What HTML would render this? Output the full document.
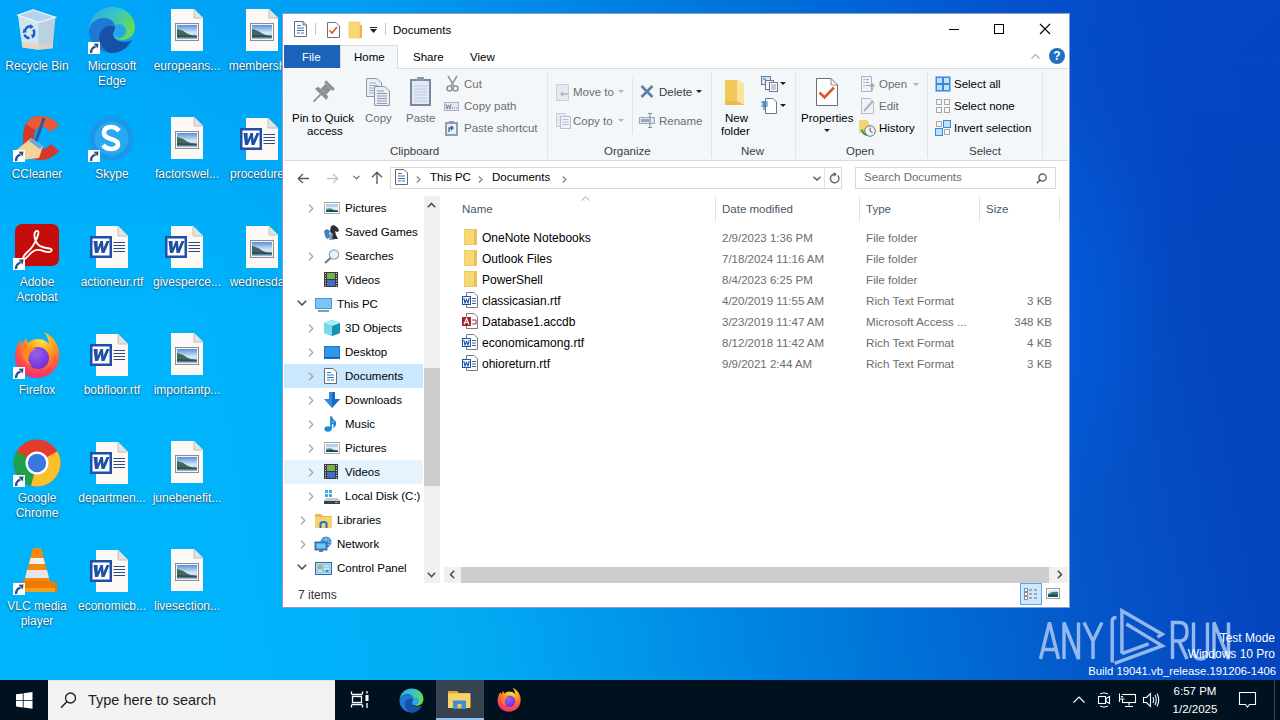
<!DOCTYPE html>
<html><head><meta charset="utf-8">
<style>
*{box-sizing:border-box}
html,body{margin:0;padding:0}
body{width:1280px;height:720px;overflow:hidden;position:relative;font-family:"Liberation Sans",sans-serif;font-size:12px;color:#000;
background:linear-gradient(80deg,#00b4fc 0%,#00b4fc 17%,#02acf4 34%,#008ae4 52%,#0070d6 66%,#0554c8 80%,#0444be 92%,#0444bc 100%);}
.a{position:absolute}
.t{position:absolute;white-space:nowrap;line-height:15px;font-size:11.5px}
.g{color:#6d6d6d}
.lbl{position:absolute;width:75px;text-align:center;color:#fff;font-size:12px;line-height:15px;text-shadow:0 1px 2px rgba(0,0,0,.55),0 0 1px rgba(0,0,0,.4)}
svg{position:absolute;overflow:visible}
</style></head><body>
<div class="a" style="left:0;top:0;width:1280px;height:320px;background:linear-gradient(180deg,rgba(0,80,230,.15),rgba(0,80,230,0))"></div>
<div class="a" style="left:0;top:0;width:1280px;height:680px;background:radial-gradient(ellipse 110px 220px at 1060px 310px,rgba(0,105,255,.38),rgba(0,105,255,0))"></div>

<!-- ===== DESKTOP ICONS ===== -->
<div id="desktop">
<svg width="0" height="0" style="position:absolute;left:0;top:0">
<defs>
<symbol id="sc" viewBox="0 0 12 12"><rect x="0" y="0" width="12" height="12" fill="#fff"/><path d="M3.2 11Q2.5 6.5 7.5 4.5" fill="none" stroke="#2b4f8a" stroke-width="2.4"/><path d="M5.5 1.8L10.5 1.5L9.8 6.5Z" fill="#2b4f8a"/></symbol>
<symbol id="imgf" viewBox="0 0 32 42"><path d="M0 0H23L32 9V42H0Z" fill="#fbf8f6"/><path d="M23 0V9H32Z" fill="#e6e2de"/><path d="M23 0.5V9H31.5" fill="none" stroke="#b8b4b0" stroke-width="0.8"/><rect x="4.5" y="14.5" width="23" height="17" fill="#f4f4f4" stroke="#8a8e92"/><linearGradient id="skyg" x1="0" y1="0" x2="0" y2="1"><stop offset="0" stop-color="#5a8ee0"/><stop offset="0.55" stop-color="#d8e6f4"/><stop offset="1" stop-color="#b0c8e0"/></linearGradient><rect x="6" y="16" width="20" height="14" fill="url(#skyg)"/><path d="M6 20Q12 21 17 25Q21 27 26 26.5V28H6Z" fill="#3e6a58"/><path d="M6 26Q14 26 26 27V30H6Z" fill="#2c4f60"/><path d="M6 28.5H26V30H6Z" fill="#9ab4cc"/></symbol>
<symbol id="wordf" viewBox="0 0 38 42"><path d="M6 0H28L38 10V42H6Z" fill="#fbf8f6"/><path d="M28 0V10H38Z" fill="#e6e2de"/><path d="M28 0.5V10H37.5" fill="none" stroke="#b8b4b0" stroke-width="0.8"/><path d="M23.5 16.5H35M23.5 19.5H35M23.5 22.5H35M23.5 25.5H35" stroke="#2f4d80" stroke-width="1.2"/><rect x="0" y="10" width="22" height="22" fill="#1f4fa6"/><rect x="2.5" y="12.5" width="17" height="17" fill="#fff"/><path d="M3.5 15H7.5L7.8 22L10.5 15H13L13.5 22L16.5 15H19.5L14.5 27H11.5L10.8 20.5L8 27H5Z" fill="#1f4fa6"/></symbol>
<linearGradient id="edg1" x1="0" y1="0" x2="1" y2="0.6"><stop offset="0" stop-color="#2aa8e8"/><stop offset="0.5" stop-color="#36c4c8"/><stop offset="1" stop-color="#6ada50"/></linearGradient>
<radialGradient id="ffg" cx="0.6" cy="0.2" r="0.9"><stop offset="0" stop-color="#ffe040"/><stop offset="0.35" stop-color="#ff9a20"/><stop offset="0.7" stop-color="#ff4a50"/><stop offset="1" stop-color="#e8208a"/></radialGradient>
<radialGradient id="ffp" cx="0.4" cy="0.3" r="0.8"><stop offset="0" stop-color="#9a60f0"/><stop offset="1" stop-color="#6a2ad0"/></radialGradient>
</defs></svg>
<svg style="left:16px;top:9px" width="42" height="44" viewBox="16 9 42 44"><path d="M17.9 15.1L38.9 22.3L38.9 49.8L22.3 47.6Z" fill="#e4ebef" fill-opacity="0.92"/><path d="M38.9 22.3L55.5 17.3L52.6 48.3L38.9 49.8Z" fill="#ccd5dc" fill-opacity="0.92"/><path d="M17.9 15.1L33.1 10L55.5 17.3L38.9 22.3Z" fill="#b4d2ea" stroke="#eef6fb" stroke-width="1.2"/><path d="M22.3 47.6L38.9 49.8L38.9 44L21.8 42Z" fill="#f2cdb8" fill-opacity="0.8"/><path d="M38.9 49.8L52.6 48.3L53 43.5L38.9 45Z" fill="#ead0c4" fill-opacity="0.7"/><g fill="none" stroke="#1a5fc8" stroke-width="2.4"><path d="M25.2 30.5Q26.5 26 30.5 26.2"/><path d="M33.5 29.5Q35.2 33 33 36.5"/><path d="M29.5 38.3Q25.5 38 24.5 34.5"/></g><path d="M30 24L33.8 26.8L30.2 29.2Z" fill="#1a5fc8"/><path d="M35.8 35.2L32.2 38.6L31 34.6Z" fill="#1a5fc8"/><path d="M22.5 33L23.8 28.6L27 32.2Z" fill="#1a5fc8"/></svg>
<svg style="left:13px;top:116px" width="48" height="44" viewBox="0 0 48 44"><path d="M46 9Q38 0 28 0Q10 0 10 22Q10 44 28 44Q38 44 46 35L38 28Q34 33 29 33Q21 33 21 22Q21 11 29 11Q34 11 38 16Z" fill="#d9362a"/><path d="M46 9Q38 0 28 0Q18 0 13 8L22 14Q25 11 29 11Q34 11 38 16Z" fill="#e85a3a"/><path d="M31 2L22 28" stroke="#2a5a9a" stroke-width="3"/><path d="M1 36L18 22L30 30L26 42L8 44Z" fill="#f2d49a"/><path d="M18 22L30 30L27 33L16 25Z" fill="#6aa8e0"/></svg>
<svg style="left:13px;top:150px" width="12" height="12" viewBox="0 0 12 12"><use href="#sc" width="12" height="12"/></svg>
<svg style="left:15px;top:224px" width="44" height="42" viewBox="0 0 44 42"><rect x="0" y="0" width="44" height="42" rx="7" fill="#c40c0a"/><path d="M22 7C19.5 7 19 10 19.8 14C20.8 19 24 22.5 29 23.5C34 24.5 37.5 24.5 36.5 26.8C35.5 28.8 30 27.8 25.5 26.2C20.5 25 17.5 27 14.5 30.5C11.5 34 9.5 35.5 8.5 34.5C7.5 33.5 9.5 30.5 13 27.5C17 24 19.5 20 21.5 15C23.5 10 24.5 7 22 7Z" fill="none" stroke="#fff" stroke-width="1.9"/></svg>
<svg style="left:13px;top:258px" width="12" height="12" viewBox="0 0 12 12"><use href="#sc" width="12" height="12"/></svg>
<svg style="left:14px;top:331px" width="46" height="47" viewBox="0 0 46 47"><path d="M23 47C10 47 1 37 1 26C1 18 4 12 7 9L8 14L12 7L14 12Q18 8 24 8Q31 8 35 13Q34 6 30 1Q40 5 44 16Q46 22 45 28C44 38 35 47 23 47Z" fill="url(#ffg)"/><circle cx="24" cy="27" r="11" fill="url(#ffp)"/><path d="M8 22Q14 15 22 18Q16 20 15 25Q13 30 18 35Q10 33 8 22Z" fill="#ff8a1a"/></svg>
<svg style="left:13px;top:367px" width="12" height="12" viewBox="0 0 12 12"><use href="#sc" width="12" height="12"/></svg>
<svg style="left:13px;top:439px" width="48" height="48" viewBox="0 0 48 48"><circle cx="24" cy="24" r="23.5" fill="#e33b2e"/><path d="M24 24L3.65 12.25A23.5 23.5 0 0 0 18 46.7Z" fill="#1fa04a"/><path d="M24 24L18 46.7A23.5 23.5 0 0 0 44.35 12.25Z" fill="#fbc02d"/><circle cx="24" cy="24" r="11.5" fill="#fff"/><circle cx="24" cy="24" r="9.2" fill="#3a78e0"/></svg>
<svg style="left:13px;top:475px" width="12" height="12" viewBox="0 0 12 12"><use href="#sc" width="12" height="12"/></svg>
<svg style="left:19px;top:548px" width="38" height="44" viewBox="0 0 38 44"><path d="M14 0H22L31 34H5Z" fill="#f28a10"/><path d="M11.5 10H24.5L26 16H10Z" fill="#f4f0f0"/><path d="M8 22H28L30 30H6Z" fill="#e8e4ec"/><path d="M0 36Q2 33 6 33H30Q35 33 38 36V44H0Z" fill="#f07a00"/><path d="M2 40H36V44H2Z" fill="#f4a020"/></svg>
<svg style="left:13px;top:583px" width="12" height="12" viewBox="0 0 12 12"><use href="#sc" width="12" height="12"/></svg>
<svg style="left:88px;top:6px" width="48" height="48" viewBox="0 0 48 48"><path d="M24 1C37 1 47 10 47 21C47 29 41 34 34 34C28 34 25 31 25 28C25 26 27 24 27 21C27 16 22 12 16 12C8 12 1 18 1 25C1 11 11 1 24 1Z" fill="url(#edg1)"/><circle cx="31" cy="25" r="7" fill="#22a6ee"/><path d="M1 25C1 18 8 12 16 12C22 12 27 16 27 21C27 24 25 26 25 28C25 32 29 36 36 36C39 36 42 35 44 34C40 42 32 47 24 47C11 47 1 37 1 25Z" fill="#1f78d4"/><path d="M14 40C10 35 10 26 16 22C20 19 26 20 27 21C27 24 25 26 25 28C25 32 29 36 36 36C39 36 42 35 44 34C40 42 32 47 24 47C20 47 16 44 14 40Z" fill="#1850a8"/></svg>
<svg style="left:88px;top:42px" width="12" height="12" viewBox="0 0 12 12"><use href="#sc" width="12" height="12"/></svg>
<svg style="left:89px;top:116px" width="45" height="45" viewBox="0 0 45 45"><circle cx="22.5" cy="22.5" r="22" fill="#1c96e6"/><circle cx="22.5" cy="22.5" r="17" fill="#28a8f0"/><path d="M30 15Q27 11 22 11Q15 11 15 17Q15 21 22 23Q29 25 29 28Q29 33 22.5 33Q17 33 14 29" fill="none" stroke="#fff" stroke-width="4.6"/></svg>
<svg style="left:88px;top:150px" width="12" height="12" viewBox="0 0 12 12"><use href="#sc" width="12" height="12"/></svg>
<svg style="left:90px;top:226px" width="38" height="42" viewBox="0 0 38 42"><use href="#wordf" width="38" height="42"/></svg>
<svg style="left:90px;top:334px" width="38" height="42" viewBox="0 0 38 42"><use href="#wordf" width="38" height="42"/></svg>
<svg style="left:90px;top:442px" width="38" height="42" viewBox="0 0 38 42"><use href="#wordf" width="38" height="42"/></svg>
<svg style="left:90px;top:550px" width="38" height="42" viewBox="0 0 38 42"><use href="#wordf" width="38" height="42"/></svg>
<svg style="left:171px;top:9px" width="32" height="42" viewBox="0 0 32 42"><use href="#imgf" width="32" height="42"/></svg>
<svg style="left:171px;top:117px" width="32" height="42" viewBox="0 0 32 42"><use href="#imgf" width="32" height="42"/></svg>
<svg style="left:171px;top:333px" width="32" height="42" viewBox="0 0 32 42"><use href="#imgf" width="32" height="42"/></svg>
<svg style="left:171px;top:441px" width="32" height="42" viewBox="0 0 32 42"><use href="#imgf" width="32" height="42"/></svg>
<svg style="left:171px;top:549px" width="32" height="42" viewBox="0 0 32 42"><use href="#imgf" width="32" height="42"/></svg>
<svg style="left:165px;top:226px" width="38" height="42" viewBox="0 0 38 42"><use href="#wordf" width="38" height="42"/></svg>
<svg style="left:246px;top:9px" width="32" height="42" viewBox="0 0 32 42"><use href="#imgf" width="32" height="42"/></svg>
<svg style="left:240px;top:118px" width="38" height="42" viewBox="0 0 38 42"><use href="#wordf" width="38" height="42"/></svg>
<svg style="left:246px;top:226px" width="32" height="42" viewBox="0 0 32 42"><use href="#imgf" width="32" height="42"/></svg>
<div class="lbl" style="left:-3px;top:59px;width:80px">Recycle Bin</div>
<div class="lbl" style="left:-3px;top:167px;width:80px">CCleaner</div>
<div class="lbl" style="left:-3px;top:275px;width:80px">Adobe<br>Acrobat</div>
<div class="lbl" style="left:-3px;top:383px;width:80px">Firefox</div>
<div class="lbl" style="left:-3px;top:491px;width:80px">Google<br>Chrome</div>
<div class="lbl" style="left:-3px;top:599px;width:80px">VLC media<br>player</div>
<div class="lbl" style="left:72px;top:59px;width:80px">Microsoft<br>Edge</div>
<div class="lbl" style="left:72px;top:167px;width:80px">Skype</div>
<div class="lbl" style="left:72px;top:275px;width:80px">actioneur.rtf</div>
<div class="lbl" style="left:72px;top:383px;width:80px">bobfloor.rtf</div>
<div class="lbl" style="left:72px;top:491px;width:80px">departmen...</div>
<div class="lbl" style="left:72px;top:599px;width:80px">economicb...</div>
<div class="lbl" style="left:147px;top:59px;width:80px">europeans...</div>
<div class="lbl" style="left:147px;top:167px;width:80px">factorswel...</div>
<div class="lbl" style="left:147px;top:275px;width:80px">givesperce...</div>
<div class="lbl" style="left:147px;top:383px;width:80px">importantp...</div>
<div class="lbl" style="left:147px;top:491px;width:80px">junebenefit...</div>
<div class="lbl" style="left:147px;top:599px;width:80px">livesection...</div>
<div class="lbl" style="left:222px;top:59px;width:80px">membersh...</div>
<div class="lbl" style="left:222px;top:167px;width:80px">procedure...</div>
<div class="lbl" style="left:222px;top:275px;width:80px">wednesda...</div>
</div>

<!-- ===== EXPLORER WINDOW ===== -->
<div id="win">
<div class="a" style="left:282px;top:13px;width:788px;height:595px;background:#fff;border:1px solid rgba(0,40,130,.45)"></div>
<!-- title bar icons -->
<svg style="left:294px;top:21px" width="13" height="16" viewBox="0 0 13 16"><path d="M0.5 0.5H9L12.5 4V15.5H0.5Z" fill="#fff" stroke="#6a6a6a"/><path d="M9 0.5V4H12.5" fill="none" stroke="#6a6a6a"/><path d="M3 4.5H7M3 7H10M3 9.5H10M3 12H6M7 12H10" stroke="#2a78c8" stroke-width="1.2"/></svg>
<div class="a" style="left:315px;top:23px;width:1px;height:12px;background:#c8c8c8"></div>
<svg style="left:327px;top:22px" width="13" height="16" viewBox="0 0 13 16"><path d="M0.5 0.5H9L12.5 4V15.5H0.5Z" fill="#fff" stroke="#707070"/><path d="M2.5 8.5L5 11L10 5" fill="none" stroke="#d9542a" stroke-width="1.6"/></svg>
<svg style="left:349px;top:22px" width="13" height="16" viewBox="0 0 13 16"><rect x="0" y="0" width="11" height="16" fill="#f8d775"/><path d="M11 3H13V16H11Z" fill="#e4b450"/><rect x="0" y="0" width="11" height="16" fill="none" stroke="#e8c060" stroke-width="0.6"/></svg>
<div class="a" style="left:370px;top:27px;width:7px;height:1px;background:#222"></div>
<svg style="left:370px;top:29px" width="7" height="4" viewBox="0 0 7 4"><path d="M0 0H7L3.5 4Z" fill="#222"/></svg>
<div class="a" style="left:385px;top:23px;width:1px;height:12px;background:#c8c8c8"></div>
<div class="t" style="left:393px;top:23px">Documents</div>
<!-- window controls -->
<div class="a" style="left:949px;top:29px;width:10px;height:1px;background:#000"></div>
<div class="a" style="left:994px;top:24px;width:10px;height:10px;border:1px solid #000"></div>
<svg style="left:1040px;top:24px" width="10" height="10" viewBox="0 0 10 10"><path d="M0 0L10 10M10 0L0 10" stroke="#000" stroke-width="1.1"/></svg>

<!-- ribbon tabs -->
<div class="a" style="left:284px;top:45px;width:56px;height:23px;background:#1a63b8"></div>
<div class="t" style="left:302px;top:50px;color:#fff">File</div>
<div class="a" style="left:340px;top:45px;width:58px;height:24px;background:#f3f7fa;border:1px solid #dadbdc;border-bottom:none"></div>
<div class="t" style="left:354px;top:50px">Home</div>
<div class="t" style="left:413px;top:50px">Share</div>
<div class="t" style="left:470px;top:50px">View</div>
<div class="a" style="left:398px;top:68px;width:670px;height:1px;background:#dadbdc"></div>
<svg style="left:1031px;top:54px" width="9" height="5" viewBox="0 0 9 5"><path d="M0.5 4.5L4.5 0.5L8.5 4.5" fill="none" stroke="#b0b0b0" stroke-width="1.2"/></svg>
<div class="a" style="left:1049px;top:48px;width:16px;height:16px;border-radius:50%;background:#1f6fc5"></div>
<div class="t" style="left:1049px;top:48px;width:16px;text-align:center;color:#fff;font-weight:bold;font-size:12px;line-height:16px">?</div>

<!-- ribbon body -->
<div class="a" style="left:284px;top:69px;width:784px;height:91px;background:#f3f7fa"></div>
<div class="a" style="left:284px;top:160px;width:784px;height:1px;background:#dadbdc"></div>
<!-- separators -->
<div class="a" style="left:547px;top:72px;width:1px;height:86px;background:#e2e3e4"></div>
<div class="a" style="left:711px;top:72px;width:1px;height:86px;background:#e2e3e4"></div>
<div class="a" style="left:795px;top:72px;width:1px;height:86px;background:#e2e3e4"></div>
<div class="a" style="left:927px;top:72px;width:1px;height:86px;background:#e2e3e4"></div>
<div class="a" style="left:1042px;top:72px;width:1px;height:86px;background:#e2e3e4"></div>
<div class="a" style="left:632px;top:78px;width:1px;height:56px;background:#e2e3e4"></div>
<!-- Clipboard -->
<svg style="left:310px;top:83px" width="23" height="22" viewBox="0 0 23 22"><g transform="rotate(45 12 10)" fill="#8a9294"><rect x="6" y="-2" width="12" height="3"/><rect x="8" y="1" width="8" height="7"/><path d="M5 8H19L20 12H4Z"/><rect x="11.2" y="12" width="1.8" height="10"/></g></svg>
<div class="t" style="left:292px;top:111px">Pin to Quick</div>
<div class="t" style="left:307px;top:124px">access</div>
<svg style="left:366px;top:78px" width="25" height="28" viewBox="0 0 25 28"><path d="M0.5 0.5H11L15.5 5V18.5H0.5Z" fill="#e9eef7" stroke="#8d97a8"/><path d="M3 5H10M3 7.5H12M3 10H12M3 12.5H12M3 15H12" stroke="#a3adc0"/><path d="M8.5 8.5H19L23.5 13V27.5H8.5Z" fill="#e9eef7" stroke="#8d97a8"/><path d="M11 13H18M11 15.5H21M11 18H21M11 20.5H21M11 23H21M11 25.5H21" stroke="#8d97b0"/></svg>
<div class="t g" style="left:365px;top:111px">Copy</div>
<svg style="left:410px;top:77px" width="21" height="29" viewBox="0 0 21 29"><rect x="1" y="3" width="19" height="25" fill="#dfe8f6" stroke="#7d899b" stroke-width="2"/><rect x="7" y="0" width="7" height="4" fill="#8e98a8"/><path d="M4 9H17M4 12H17M4 15H17M4 18H17M4 21H17M4 24H17" stroke="#b8c4d8" stroke-width="0.8"/></svg>
<div class="t g" style="left:406px;top:111px">Paste</div>
<svg style="left:446px;top:76px" width="13" height="16" viewBox="0 0 13 16"><path d="M2 0L8 10M11 0L5 10" stroke="#8f979b" stroke-width="1.5"/><circle cx="3.5" cy="12.5" r="2.5" fill="none" stroke="#8f979b" stroke-width="1.6"/><circle cx="9.5" cy="12.5" r="2.5" fill="none" stroke="#8f979b" stroke-width="1.6"/></svg>
<div class="t g" style="left:464px;top:77px">Cut</div>
<svg style="left:444px;top:102px" width="15" height="9" viewBox="0 0 15 9"><rect x="0.5" y="0.5" width="14" height="8" fill="#e3e8f2" stroke="#a8b2c4"/><path d="M2 2L3 7L4.5 3L6 7L7 2M8 6H9M10 6H11M12 6H13" stroke="#6e7a90" stroke-width="0.9" fill="none"/></svg>
<div class="t g" style="left:464px;top:99px">Copy path</div>
<svg style="left:445px;top:121px" width="13" height="15" viewBox="0 0 13 15"><rect x="1" y="2" width="11" height="12" fill="#eaf0f8" stroke="#7d899b" stroke-width="1.6"/><rect x="4" y="0" width="5" height="3" fill="#8e98a8"/><path d="M4 11V7H8M6 5L8 7L6 9" fill="none" stroke="#2f62a8" stroke-width="1.3"/></svg>
<div class="t g" style="left:464px;top:121px">Paste shortcut</div>
<div class="t" style="left:390px;top:144px;color:#3c3c3c">Clipboard</div>
<!-- Organize -->
<svg style="left:556px;top:84px" width="14" height="17" viewBox="0 0 14 17"><path d="M0.5 0.5H12.5V16.5H0.5Z" fill="#e6ebf2" stroke="#c8d0dc"/><path d="M12 10H5M7 8L5 10L7 12" fill="none" stroke="#a8b4c6" stroke-width="1.3"/></svg>
<div class="t g" style="left:573px;top:85px">Move to</div>
<svg style="left:618px;top:90px" width="6" height="3" viewBox="0 0 6 3"><path d="M0 0H6L3 3Z" fill="#b4b4b4"/></svg>
<svg style="left:556px;top:113px" width="15" height="16" viewBox="0 0 15 16"><path d="M0.5 0.5H9.5V13.5H0.5Z" fill="#e6ebf2" stroke="#c8d0dc"/><path d="M4.5 3.5H14.5V15.5H4.5Z" fill="#eef2f7" stroke="#b4bfcf"/><path d="M6.5 6.5H12.5M6.5 9H12.5M6.5 11.5H12.5" stroke="#b4bfcf"/></svg>
<div class="t g" style="left:573px;top:114px">Copy to</div>
<svg style="left:618px;top:119px" width="6" height="3" viewBox="0 0 6 3"><path d="M0 0H6L3 3Z" fill="#b4b4b4"/></svg>
<svg style="left:640px;top:85px" width="14" height="13" viewBox="0 0 14 13"><path d="M1.5 1L12.5 12M12.5 1L1.5 12" stroke="#5f7fa6" stroke-width="2.6"/></svg>
<div class="t" style="left:659px;top:85px;color:#3a3a3a">Delete</div>
<svg style="left:696px;top:90px" width="6" height="3" viewBox="0 0 6 3"><path d="M0 0H6L3 3Z" fill="#222"/></svg>
<svg style="left:639px;top:113px" width="17" height="15" viewBox="0 0 17 15"><rect x="0.5" y="4.5" width="15" height="6" fill="#dfe6f1" stroke="#9aa6b8"/><rect x="2" y="6" width="8" height="3" fill="#9aa8c0"/><path d="M9 0.5H13M11 0.5V14.5M9 14.5H13" stroke="#8a94a4" stroke-width="1.2"/></svg>
<div class="t g" style="left:659px;top:114px">Rename</div>
<div class="t" style="left:604px;top:144px;color:#3c3c3c">Organize</div>
<!-- New -->
<svg style="left:725px;top:80px" width="20" height="26" viewBox="0 0 20 26"><path d="M0 0H12L19 4V25H0Z" fill="#f5d06c"/><path d="M12 0L19 4V25L12 21Z" fill="#fbe39a"/><path d="M0 0H12V21H0Z" fill="#f2c85a"/><path d="M0 21H12L19 25H0Z" fill="#e8bc50"/></svg>
<div class="t" style="left:725px;top:111px">New</div>
<div class="t" style="left:721px;top:124px">folder</div>
<svg style="left:761px;top:76px" width="17" height="16" viewBox="0 0 17 16"><rect x="0.5" y="0.5" width="9" height="8" fill="#d8e8f4" stroke="#6b7a90"/><path d="M2 3H5" stroke="#2f80c8" stroke-width="1.2"/><rect x="4.5" y="4.5" width="8" height="9" fill="#eef3f8" stroke="#6b7a90"/><rect x="8.5" y="6.5" width="8" height="9" fill="#fff" stroke="#6b7a90"/><path d="M10 9H15M10 11H15M10 13H15" stroke="#8c98a8"/></svg>
<svg style="left:780px;top:82px" width="6" height="3" viewBox="0 0 6 3"><path d="M0 0H6L3 3Z" fill="#222"/></svg>
<svg style="left:761px;top:98px" width="16" height="16" viewBox="0 0 16 16"><path d="M4.5 0.5H12L15.5 4V15.5H4.5Z" fill="#fff" stroke="#6b7a90"/><path d="M0 4H7M1 6H7M0 8H7M3 3V12" stroke="#2a74c0" stroke-width="1.1"/></svg>
<svg style="left:780px;top:104px" width="6" height="3" viewBox="0 0 6 3"><path d="M0 0H6L3 3Z" fill="#222"/></svg>
<div class="t" style="left:741px;top:144px;color:#3c3c3c">New</div>
<!-- Open -->
<svg style="left:816px;top:78px" width="22" height="28" viewBox="0 0 22 28"><path d="M0.5 0.5H15L21.5 7V27.5H0.5Z" fill="#fff" stroke="#6e6e6e"/><path d="M15 0.5V7H21.5" fill="none" stroke="#8a8a8a"/><path d="M3.5 14.5L8.5 19.5L18 9.5" fill="none" stroke="#e0562c" stroke-width="2.6"/></svg>
<div class="t" style="left:801px;top:111px">Properties</div>
<svg style="left:824px;top:129px" width="6" height="3" viewBox="0 0 6 3"><path d="M0 0H6L3 3Z" fill="#222"/></svg>
<svg style="left:861px;top:76px" width="14" height="16" viewBox="0 0 14 16"><path d="M0.5 0.5H10.5V15.5H0.5Z" fill="#eef2f8" stroke="#aab4c4"/><path d="M2.5 3.5H4M5 3.5H8M2.5 6.5H4M5 6.5H8M2.5 9.5H4M5 9.5H8" stroke="#98a8c0"/><path d="M11 15V8M8.5 10.5L11 8L13.5 10.5" fill="none" stroke="#a8a8a8" stroke-width="1.6"/></svg>
<div class="t g" style="left:879px;top:77px">Open</div>
<svg style="left:913px;top:83px" width="6" height="3" viewBox="0 0 6 3"><path d="M0 0H6L3 3Z" fill="#b4b4b4"/></svg>
<svg style="left:861px;top:98px" width="14" height="16" viewBox="0 0 14 16"><path d="M0.5 0.5H9L12.5 4V15.5H0.5Z" fill="#f0f3f8" stroke="#b4bcc8"/><path d="M3 13L12 3" stroke="#a8b4c4" stroke-width="2"/></svg>
<div class="t g" style="left:879px;top:99px">Edit</div>
<svg style="left:859px;top:120px" width="17" height="17" viewBox="0 0 17 17"><path d="M0 0H8L10 2V13H0Z" fill="#f4d470"/><circle cx="11" cy="11" r="5.3" fill="#f4f4f4" stroke="#707070"/><path d="M11 7.5V11L13.5 12.5" fill="none" stroke="#555" stroke-width="1"/><path d="M3 9.5A6 6 0 0 0 8 15" fill="none" stroke="#2aa040" stroke-width="2"/></svg>
<div class="t" style="left:879px;top:121px">History</div>
<div class="t" style="left:846px;top:144px;color:#3c3c3c">Open</div>
<!-- Select -->
<svg style="left:935px;top:76px" width="16" height="16" viewBox="0 0 16 16"><rect x="0.5" y="0.5" width="15" height="15" fill="#3a8ad8"/><rect x="2" y="2" width="5" height="5" fill="#bfe0fa"/><rect x="9" y="2" width="5" height="5" fill="#bfe0fa"/><rect x="2" y="9" width="5" height="5" fill="#bfe0fa"/><rect x="9" y="9" width="5" height="5" fill="#bfe0fa"/></svg>
<div class="t" style="left:954px;top:77px">Select all</div>
<svg style="left:935px;top:98px" width="16" height="16" viewBox="0 0 16 16"><g fill="none" stroke="#a8a8a8"><rect x="1.5" y="1.5" width="5" height="5"/><rect x="9.5" y="1.5" width="5" height="5"/><rect x="1.5" y="9.5" width="5" height="5"/><rect x="9.5" y="9.5" width="5" height="5"/></g></svg>
<div class="t" style="left:954px;top:99px">Select none</div>
<svg style="left:935px;top:120px" width="16" height="16" viewBox="0 0 16 16"><g fill="none" stroke="#a8a8a8"><rect x="1.5" y="1.5" width="5" height="5"/><rect x="9.5" y="9.5" width="5" height="5"/></g><rect x="8.5" y="0.5" width="7" height="7" fill="#bfe0fa" stroke="#3a8ad8"/><rect x="0.5" y="8.5" width="7" height="7" fill="#bfe0fa" stroke="#3a8ad8"/></svg>
<div class="t" style="left:954px;top:121px">Invert selection</div>
<div class="t" style="left:969px;top:144px;color:#3c3c3c">Select</div>
<!-- address row -->
<svg style="left:297px;top:173px" width="12" height="11" viewBox="0 0 12 11"><path d="M12 5.5H1.5M6 1L1.2 5.5L6 10" fill="none" stroke="#5a5a5a" stroke-width="1.3"/></svg>
<svg style="left:327px;top:173px" width="12" height="11" viewBox="0 0 12 11"><path d="M0 5.5H10.5M6 1L10.8 5.5L6 10" fill="none" stroke="#c4c4c4" stroke-width="1.3"/></svg>
<svg style="left:353px;top:175px" width="7" height="5" viewBox="0 0 7 5"><path d="M0.5 0.8L3.5 3.8L6.5 0.8" fill="none" stroke="#6a6a6a" stroke-width="1.2"/></svg>
<svg style="left:371px;top:171px" width="12" height="13" viewBox="0 0 12 13"><path d="M6 13V1.5M1 6.2L6 1.2L11 6.2" fill="none" stroke="#5a5a5a" stroke-width="1.4"/></svg>
<div class="a" style="left:390px;top:167px;width:452px;height:22px;border:1px solid #d9d9d9;background:#fff"></div>
<div class="a" style="left:824px;top:168px;width:1px;height:20px;background:#e4e4e4"></div>
<svg style="left:395px;top:169px" width="13" height="16" viewBox="0 0 13 16"><path d="M0.5 0.5H9L12.5 4V15.5H0.5Z" fill="#fff" stroke="#6a6a6a"/><path d="M3 4.5H7M3 7H10M3 9.5H10M3 12H6M7 12H10" stroke="#2a78c8" stroke-width="1.2"/></svg>
<svg style="left:416px;top:176px" width="5" height="7" viewBox="0 0 5 7"><path d="M0.8 0.5L4 3.5L0.8 6.5" fill="none" stroke="#8a8a8a" stroke-width="1.3"/></svg>
<div class="t" style="left:430px;top:170px">This PC</div>
<svg style="left:478px;top:176px" width="5" height="7" viewBox="0 0 5 7"><path d="M0.8 0.5L4 3.5L0.8 6.5" fill="none" stroke="#8a8a8a" stroke-width="1.3"/></svg>
<div class="t" style="left:492px;top:170px">Documents</div>
<svg style="left:562px;top:176px" width="5" height="7" viewBox="0 0 5 7"><path d="M0.8 0.5L4 3.5L0.8 6.5" fill="none" stroke="#8a8a8a" stroke-width="1.3"/></svg>
<svg style="left:813px;top:176px" width="8" height="5" viewBox="0 0 8 5"><path d="M0.5 0.8L4 4L7.5 0.8" fill="none" stroke="#555" stroke-width="1.3"/></svg>
<svg style="left:829px;top:172px" width="11" height="12" viewBox="0 0 11 12"><path d="M8.8 3.5A4.3 4.3 0 1 1 5.5 2.2" fill="none" stroke="#6a6a6a" stroke-width="1.4"/><path d="M4.5 0L8 2.2L4.8 4.8Z" fill="#6a6a6a"/></svg>
<div class="a" style="left:855px;top:167px;width:201px;height:22px;border:1px solid #d9d9d9;background:#fff"></div>
<div class="t" style="left:864px;top:170px;color:#6d6d6d">Search Documents</div>
<svg style="left:1036px;top:173px" width="11" height="11" viewBox="0 0 11 11"><circle cx="6.5" cy="4.5" r="3.6" fill="none" stroke="#555" stroke-width="1.3"/><path d="M4 7L0.8 10.2" stroke="#555" stroke-width="1.6"/></svg>
<!-- nav pane -->
<div class="a" style="left:284px;top:364px;width:139px;height:24px;background:#cce8ff"></div>
<div class="a" style="left:284px;top:460px;width:139px;height:24px;background:#e5f3ff"></div>
<svg style="left:308px;top:204px" width="6" height="9" viewBox="0 0 6 9"><path d="M1 0.8L4.8 4.5L1 8.2" fill="none" stroke="#a6a6a6" stroke-width="1.3"/></svg>
<svg style="left:324px;top:202px" width="16" height="12" viewBox="0 0 16 12"><rect x="0.5" y="0.5" width="15" height="11" fill="#fff" stroke="#9fb0c0"/><rect x="2" y="2" width="12" height="8" fill="#e4eef8"/><rect x="2" y="2" width="12" height="3" fill="#b8d0ec"/><path d="M2 7Q6 5.5 9 7.5Q12 8.5 14 8V10H2Z" fill="#4f8a84"/><path d="M2 8.5Q8 7.5 14 9V10H2Z" fill="#20485a"/></svg>
<div class="t" style="left:345px;top:201px">Pictures</div>
<svg style="left:324px;top:225px" width="16" height="15" viewBox="0 0 16 15"><path d="M7 1L10 0L14 3L15 6L13 7L11 6L12 10L14 14H6L8 9L6 6Z" fill="#2a2f38"/><path d="M0 6L3 4L6 6L5 9L7 12L3 14L1 11Z" fill="#3a80c8"/><path d="M6 7L9 9L8 13L11 15H5Z" fill="#8aa0b8"/></svg>
<div class="t" style="left:345px;top:225px">Saved Games</div>
<svg style="left:308px;top:252px" width="6" height="9" viewBox="0 0 6 9"><path d="M1 0.8L4.8 4.5L1 8.2" fill="none" stroke="#a6a6a6" stroke-width="1.3"/></svg>
<svg style="left:324px;top:249px" width="16" height="15" viewBox="0 0 16 15"><circle cx="10" cy="5.5" r="4.7" fill="#e8f4fb" stroke="#8aa4b8" stroke-width="1.2"/><path d="M6.5 9L1 14" stroke="#6d7880" stroke-width="2"/></svg>
<div class="t" style="left:345px;top:249px">Searches</div>
<svg style="left:324px;top:272px" width="14" height="15" viewBox="0 0 14 15"><rect x="0" y="0" width="14" height="15" fill="#3b3b3b"/><rect x="3" y="1" width="8" height="6" fill="#7ab04a"/><rect x="3" y="8" width="8" height="6" fill="#3f6fc8"/><path d="M1 1.5H2M1 4H2M1 6.5H2M1 9H2M1 11.5H2M1 14H2M12 1.5H13M12 4H13M12 6.5H13M12 9H13M12 11.5H13M12 14H13" stroke="#d8d8d8"/></svg>
<div class="t" style="left:345px;top:273px">Videos</div>
<svg style="left:297px;top:300px" width="10" height="6" viewBox="0 0 10 6"><path d="M0.8 0.8L5 5L9.2 0.8" fill="none" stroke="#404040" stroke-width="1.4"/></svg>
<svg style="left:315px;top:298px" width="17" height="15" viewBox="0 0 17 15"><rect x="0" y="0" width="17" height="11" fill="#3a9ee8"/><rect x="1" y="1" width="15" height="9" fill="#7cc4f4"/><rect x="3" y="12" width="11" height="2" fill="#8a9aa8"/></svg>
<div class="t" style="left:337px;top:297px">This PC</div>
<svg style="left:308px;top:324px" width="6" height="9" viewBox="0 0 6 9"><path d="M1 0.8L4.8 4.5L1 8.2" fill="none" stroke="#a6a6a6" stroke-width="1.3"/></svg>
<svg style="left:324px;top:320px" width="16" height="16" viewBox="0 0 16 16"><path d="M8 0L16 3V13L8 16L0 13V3Z" fill="#2ab4d8"/><path d="M0 3L8 6V16L0 13Z" fill="#7ad8ea"/><path d="M8 6L16 3V13L8 16Z" fill="#1890b8"/><path d="M0 3L8 0L16 3L8 6Z" fill="#a8ecf6"/></svg>
<div class="t" style="left:345px;top:321px">3D Objects</div>
<svg style="left:308px;top:348px" width="6" height="9" viewBox="0 0 6 9"><path d="M1 0.8L4.8 4.5L1 8.2" fill="none" stroke="#a6a6a6" stroke-width="1.3"/></svg>
<svg style="left:324px;top:346px" width="16" height="13" viewBox="0 0 16 13"><rect x="0" y="0" width="16" height="13" fill="#1a78d0"/><rect x="1" y="1" width="14" height="10" fill="#2f98e8"/><rect x="1" y="11" width="14" height="1" fill="#0f5aa8"/></svg>
<div class="t" style="left:345px;top:345px">Desktop</div>
<svg style="left:308px;top:372px" width="6" height="9" viewBox="0 0 6 9"><path d="M1 0.8L4.8 4.5L1 8.2" fill="none" stroke="#a6a6a6" stroke-width="1.3"/></svg>
<svg style="left:324px;top:368px" width="13" height="16" viewBox="0 0 13 16"><path d="M0.5 0.5H9L12.5 4V15.5H0.5Z" fill="#fff" stroke="#6a6a6a"/><path d="M3 4.5H7M3 7H10M3 9.5H10M3 12H6M7 12H10" stroke="#2a78c8" stroke-width="1.2"/></svg>
<div class="t" style="left:345px;top:369px">Documents</div>
<svg style="left:308px;top:396px" width="6" height="9" viewBox="0 0 6 9"><path d="M1 0.8L4.8 4.5L1 8.2" fill="none" stroke="#a6a6a6" stroke-width="1.3"/></svg>
<svg style="left:324px;top:392px" width="16" height="16" viewBox="0 0 16 16"><path d="M5 0H11V7H16L8 16L0 7H5Z" fill="#2f8ae0"/><path d="M8 0H11V7H16L8 16Z" fill="#1a6cc0"/></svg>
<div class="t" style="left:345px;top:393px">Downloads</div>
<svg style="left:308px;top:420px" width="6" height="9" viewBox="0 0 6 9"><path d="M1 0.8L4.8 4.5L1 8.2" fill="none" stroke="#a6a6a6" stroke-width="1.3"/></svg>
<svg style="left:324px;top:416px" width="12" height="16" viewBox="0 0 12 16"><ellipse cx="4" cy="13" rx="3.6" ry="2.8" fill="#1e88d8"/><path d="M7 13V0.5Q8 4 11 6Q12 8 10.5 10Q10.5 7 7.5 6" fill="none" stroke="#1e88d8" stroke-width="1.8"/></svg>
<div class="t" style="left:345px;top:417px">Music</div>
<svg style="left:308px;top:444px" width="6" height="9" viewBox="0 0 6 9"><path d="M1 0.8L4.8 4.5L1 8.2" fill="none" stroke="#a6a6a6" stroke-width="1.3"/></svg>
<svg style="left:324px;top:442px" width="16" height="12" viewBox="0 0 16 12"><rect x="0.5" y="0.5" width="15" height="11" fill="#fff" stroke="#9fb0c0"/><rect x="2" y="2" width="12" height="8" fill="#e4eef8"/><rect x="2" y="2" width="12" height="3" fill="#b8d0ec"/><path d="M2 7Q6 5.5 9 7.5Q12 8.5 14 8V10H2Z" fill="#4f8a84"/><path d="M2 8.5Q8 7.5 14 9V10H2Z" fill="#20485a"/></svg>
<div class="t" style="left:345px;top:441px">Pictures</div>
<svg style="left:308px;top:468px" width="6" height="9" viewBox="0 0 6 9"><path d="M1 0.8L4.8 4.5L1 8.2" fill="none" stroke="#a6a6a6" stroke-width="1.3"/></svg>
<svg style="left:324px;top:464px" width="14" height="15" viewBox="0 0 14 15"><rect x="0" y="0" width="14" height="15" fill="#3b3b3b"/><rect x="3" y="1" width="8" height="6" fill="#7ab04a"/><rect x="3" y="8" width="8" height="6" fill="#3f6fc8"/><path d="M1 1.5H2M1 4H2M1 6.5H2M1 9H2M1 11.5H2M1 14H2M12 1.5H13M12 4H13M12 6.5H13M12 9H13M12 11.5H13M12 14H13" stroke="#d8d8d8"/></svg>
<div class="t" style="left:345px;top:465px">Videos</div>
<svg style="left:308px;top:492px" width="6" height="9" viewBox="0 0 6 9"><path d="M1 0.8L4.8 4.5L1 8.2" fill="none" stroke="#a6a6a6" stroke-width="1.3"/></svg>
<svg style="left:324px;top:490px" width="16" height="14" viewBox="0 0 16 14"><rect x="1" y="0" width="3" height="3" fill="#3ab0e8"/><rect x="5" y="0" width="3" height="3" fill="#3ab0e8"/><rect x="1" y="4" width="3" height="3" fill="#3ab0e8"/><rect x="5" y="4" width="3" height="3" fill="#3ab0e8"/><path d="M2 8H14L16 11V14H0V11Z" fill="#c8ccd0"/><rect x="0" y="11" width="16" height="3" fill="#3a3e44"/><rect x="11" y="12" width="3" height="1" fill="#60d060"/></svg>
<div class="t" style="left:345px;top:489px">Local Disk (C:)</div>
<svg style="left:300px;top:516px" width="6" height="9" viewBox="0 0 6 9"><path d="M1 0.8L4.8 4.5L1 8.2" fill="none" stroke="#a6a6a6" stroke-width="1.3"/></svg>
<svg style="left:315px;top:513px" width="17" height="15" viewBox="0 0 17 15"><path d="M0 1H6L8 3H17V15H0Z" fill="#e8b84a"/><rect x="0" y="4" width="17" height="11" fill="#f6d36e"/><path d="M4.5 15V10.5Q4.5 8 8.5 8Q12.5 8 12.5 10.5V15H10.5V11Q10.5 10 8.5 10Q6.5 10 6.5 11V15Z" fill="#2a6cc0"/></svg>
<div class="t" style="left:337px;top:513px">Libraries</div>
<svg style="left:300px;top:540px" width="6" height="9" viewBox="0 0 6 9"><path d="M1 0.8L4.8 4.5L1 8.2" fill="none" stroke="#a6a6a6" stroke-width="1.3"/></svg>
<svg style="left:315px;top:536px" width="17" height="16" viewBox="0 0 17 16"><circle cx="11" cy="6" r="5.5" fill="#3a90d8"/><path d="M6 6H16M11 0.5V11.5M7 3Q11 5 15 3M7 9Q11 7 15 9" stroke="#a8d4f4" stroke-width="0.8" fill="none"/><rect x="0" y="6" width="12" height="8" fill="#2f8ad8" stroke="#1a5a98" stroke-width="0.8"/><rect x="1.5" y="7.5" width="9" height="5" fill="#7ac4f4"/><rect x="4" y="14" width="4" height="2" fill="#707c88"/></svg>
<div class="t" style="left:337px;top:537px">Network</div>
<svg style="left:297px;top:564px" width="10" height="6" viewBox="0 0 10 6"><path d="M0.8 0.8L5 5L9.2 0.8" fill="none" stroke="#404040" stroke-width="1.4"/></svg>
<svg style="left:315px;top:562px" width="17" height="13" viewBox="0 0 17 13"><rect x="0.5" y="0.5" width="16" height="12" fill="#b8dcf6" stroke="#2a6aa8"/><rect x="2" y="2" width="13" height="9" fill="#8cc8f0"/><circle cx="5" cy="5" r="2" fill="#e8a030"/><path d="M9 4H14M9 7H14M3 9H7" stroke="#ffffff" stroke-width="1.2"/><circle cx="12" cy="9" r="1.3" fill="#3aa050"/></svg>
<div class="t" style="left:337px;top:561px">Control Panel</div>
<div class="a" style="left:424px;top:196px;width:16px;height:387px;background:#f0f0f0"></div>
<div class="a" style="left:424px;top:368px;width:16px;height:118px;background:#cdcdcd"></div>
<svg style="left:427px;top:202px" width="9" height="6" viewBox="0 0 9 6"><path d="M0.8 5.2L4.5 1.5L8.2 5.2" fill="none" stroke="#505050" stroke-width="1.6"/></svg>
<svg style="left:427px;top:572px" width="9" height="6" viewBox="0 0 9 6"><path d="M0.8 0.8L4.5 4.5L8.2 0.8" fill="none" stroke="#505050" stroke-width="1.6"/></svg>
<div class="t" style="left:462px;top:202px;color:#4a586a">Name</div>
<svg style="left:581px;top:196px" width="9" height="5" viewBox="0 0 9 5"><path d="M0.5 4.5L4.5 0.8L8.5 4.5" fill="none" stroke="#a0a0a0" stroke-width="1"/></svg>
<div class="a" style="left:715px;top:196px;width:1px;height:26px;background:#e5e5e5"></div>
<div class="a" style="left:859px;top:196px;width:1px;height:26px;background:#e5e5e5"></div>
<div class="a" style="left:979px;top:196px;width:1px;height:26px;background:#e5e5e5"></div>
<div class="a" style="left:1059px;top:196px;width:1px;height:26px;background:#e5e5e5"></div>
<div class="t" style="left:722px;top:202px;color:#4a586a">Date modified</div>
<div class="t" style="left:866px;top:202px;color:#4a586a">Type</div>
<div class="t" style="left:986px;top:202px;color:#4a586a">Size</div>
<svg style="left:464px;top:229px" width="13" height="16" viewBox="0 0 13 16"><rect x="0" y="0" width="13" height="16" fill="#f8d775"/><path d="M10 2L13 0V16H10Z" fill="#e9bf5a"/><rect x="0.3" y="0.3" width="12.4" height="15.4" fill="none" stroke="#e8c468" stroke-width="0.6"/></svg>
<div class="t" style="left:482px;top:231px;font-size:12px">OneNote Notebooks</div>
<div class="t g" style="left:722px;top:231px">2/9/2023 1:36 PM</div>
<div class="t g" style="left:866px;top:230px;font-size:11.7px">File folder</div>
<svg style="left:464px;top:250px" width="13" height="16" viewBox="0 0 13 16"><rect x="0" y="0" width="13" height="16" fill="#f8d775"/><path d="M10 2L13 0V16H10Z" fill="#e9bf5a"/><rect x="0.3" y="0.3" width="12.4" height="15.4" fill="none" stroke="#e8c468" stroke-width="0.6"/></svg>
<div class="t" style="left:482px;top:252px;font-size:12px">Outlook Files</div>
<div class="t g" style="left:722px;top:252px">7/18/2024 11:16 AM</div>
<div class="t g" style="left:866px;top:251px;font-size:11.7px">File folder</div>
<svg style="left:464px;top:271px" width="13" height="16" viewBox="0 0 13 16"><rect x="0" y="0" width="13" height="16" fill="#f8d775"/><path d="M10 2L13 0V16H10Z" fill="#e9bf5a"/><rect x="0.3" y="0.3" width="12.4" height="15.4" fill="none" stroke="#e8c468" stroke-width="0.6"/></svg>
<div class="t" style="left:482px;top:273px;font-size:12px">PowerShell</div>
<div class="t g" style="left:722px;top:273px">8/4/2023 6:25 PM</div>
<div class="t g" style="left:866px;top:272px;font-size:11.7px">File folder</div>
<svg style="left:462px;top:292px" width="16" height="16" viewBox="0 0 16 16"><path d="M4.5 0.5H12L15.5 4V15.5H4.5Z" fill="#fff" stroke="#7a7a7a"/><path d="M10 6.5H14M10 9H14M10 11.5H14" stroke="#2a5faa"/><rect x="0" y="4" width="9" height="9" fill="#1f55a8"/><rect x="1" y="5" width="7" height="7" fill="#fff"/><path d="M1.8 6L3 11L4.5 7.5L6 11L7.2 6" fill="none" stroke="#1f55a8" stroke-width="1.1"/></svg>
<div class="t" style="left:482px;top:294px;font-size:12px">classicasian.rtf</div>
<div class="t g" style="left:722px;top:294px">4/20/2019 11:55 AM</div>
<div class="t g" style="left:866px;top:293px;font-size:11.7px">Rich Text Format</div>
<div class="t g" style="left:952px;top:294px;width:100px;text-align:right">3 KB</div>
<svg style="left:462px;top:313px" width="16" height="16" viewBox="0 0 16 16"><path d="M4.5 0.5H12L15.5 4V15.5H4.5Z" fill="#fff" stroke="#7a7a7a"/><path d="M10 7H14V11H10" fill="none" stroke="#a83040"/><rect x="0" y="4" width="9" height="9" fill="#a4262c"/><path d="M2 11.5L4.5 5.5L7 11.5M3 9.5H6" fill="none" stroke="#fff" stroke-width="1.1"/></svg>
<div class="t" style="left:482px;top:315px;font-size:12px">Database1.accdb</div>
<div class="t g" style="left:722px;top:315px">3/23/2019 11:47 AM</div>
<div class="t g" style="left:866px;top:314px;font-size:11.7px">Microsoft Access ...</div>
<div class="t g" style="left:952px;top:315px;width:100px;text-align:right">348 KB</div>
<svg style="left:462px;top:334px" width="16" height="16" viewBox="0 0 16 16"><path d="M4.5 0.5H12L15.5 4V15.5H4.5Z" fill="#fff" stroke="#7a7a7a"/><path d="M10 6.5H14M10 9H14M10 11.5H14" stroke="#2a5faa"/><rect x="0" y="4" width="9" height="9" fill="#1f55a8"/><rect x="1" y="5" width="7" height="7" fill="#fff"/><path d="M1.8 6L3 11L4.5 7.5L6 11L7.2 6" fill="none" stroke="#1f55a8" stroke-width="1.1"/></svg>
<div class="t" style="left:482px;top:336px;font-size:12px">economicamong.rtf</div>
<div class="t g" style="left:722px;top:336px">8/12/2018 11:42 AM</div>
<div class="t g" style="left:866px;top:335px;font-size:11.7px">Rich Text Format</div>
<div class="t g" style="left:952px;top:336px;width:100px;text-align:right">4 KB</div>
<svg style="left:462px;top:355px" width="16" height="16" viewBox="0 0 16 16"><path d="M4.5 0.5H12L15.5 4V15.5H4.5Z" fill="#fff" stroke="#7a7a7a"/><path d="M10 6.5H14M10 9H14M10 11.5H14" stroke="#2a5faa"/><rect x="0" y="4" width="9" height="9" fill="#1f55a8"/><rect x="1" y="5" width="7" height="7" fill="#fff"/><path d="M1.8 6L3 11L4.5 7.5L6 11L7.2 6" fill="none" stroke="#1f55a8" stroke-width="1.1"/></svg>
<div class="t" style="left:482px;top:357px;font-size:12px">ohioreturn.rtf</div>
<div class="t g" style="left:722px;top:357px">9/9/2021 2:44 AM</div>
<div class="t g" style="left:866px;top:356px;font-size:11.7px">Rich Text Format</div>
<div class="t g" style="left:952px;top:357px;width:100px;text-align:right">3 KB</div>
<div class="a" style="left:444px;top:567px;width:624px;height:16px;background:#f0f0f0"></div>
<div class="a" style="left:461px;top:567px;width:588px;height:16px;background:#cdcdcd"></div>
<svg style="left:449px;top:570px" width="6" height="9" viewBox="0 0 6 9"><path d="M5.2 0.8L1.5 4.5L5.2 8.2" fill="none" stroke="#505050" stroke-width="1.6"/></svg>
<svg style="left:1057px;top:570px" width="6" height="9" viewBox="0 0 6 9"><path d="M0.8 0.8L4.5 4.5L0.8 8.2" fill="none" stroke="#505050" stroke-width="1.6"/></svg>
<div class="t" style="left:298px;top:588px;color:#333;font-size:12px">7 items</div>
<div class="a" style="left:1020px;top:583px;width:22px;height:22px;background:#cce8ff;border:1px solid #5aa6e6"></div>
<svg style="left:1024px;top:588px" width="14" height="12" viewBox="0 0 14 12"><g fill="#fff" stroke="#7a7a7a" stroke-width="0.8"><rect x="0.5" y="0.5" width="3" height="3"/><rect x="0.5" y="4.5" width="3" height="3"/><rect x="0.5" y="8.5" width="3" height="3"/></g><path d="M5 2H8M10 2H13M5 6H8M10 6H13M5 10H8M10 10H13" stroke="#6a6a6a" stroke-width="1.1"/></svg>
<svg style="left:1046px;top:588px" width="14" height="11" viewBox="0 0 14 11"><rect x="0.5" y="0.5" width="13" height="10" fill="#fff" stroke="#9aa0a8"/><rect x="2" y="2" width="10" height="7" fill="#dbe9f5"/><path d="M2 6Q7 3 12 4V9H2Z" fill="#3c7a7a"/><path d="M2 7Q7 5.5 12 7V9H2Z" fill="#1f4f58"/></svg>
</div>

<!-- ===== TASKBAR ===== -->
<div id="taskbar">
<div class="a" style="left:0;top:680px;width:1280px;height:40px;background:#001220"></div>
<div class="a" style="left:48px;top:680px;width:287px;height:40px;background:#f2f2f2;border-top:1px solid #e8e5e5"></div>
<div class="t" style="left:88px;top:691px;font-size:14.5px;line-height:18px;color:#1e1e1e">Type here to search</div>
<svg style="left:16px;top:692px" width="17" height="17" viewBox="0 0 17 17"><path d="M0 2.3L6.8 1.4V8H0Z M7.6 1.3L16.5 0V8H7.6Z M0 8.8H6.8V15.4L0 14.5Z M7.6 8.8H16.5V16.8L7.6 15.5Z" fill="#fff"/></svg>
<svg style="left:60px;top:692px" width="17" height="17" viewBox="0 0 17 17"><circle cx="10.5" cy="6" r="5" fill="none" stroke="#1e1e1e" stroke-width="1.3"/><path d="M7 9.5L1 15.8" stroke="#1e1e1e" stroke-width="1.4"/></svg>
<svg style="left:351px;top:691px" width="18" height="17" viewBox="0 0 18 17"><g fill="none" stroke="#fff" stroke-width="1.3"><path d="M0.5 3.5H11.5M0.5 13.5H11.5"/><rect x="1.5" y="5.5" width="9" height="6"/><path d="M0.5 0.5V3M11.5 0.5V3M0.5 14V16.5M11.5 14V16.5"/><path d="M16 0V2.5M16 12V17"/></g><rect x="14.5" y="4" width="3" height="6" fill="#fff"/></svg>
<svg style="left:399px;top:688px" width="25" height="25" viewBox="0 0 48 48"><path d="M24 1C37 1 47 10 47 21C47 29 41 34 34 34C28 34 25 31 25 28C25 26 27 24 27 21C27 16 22 12 16 12C8 12 1 18 1 25C1 11 11 1 24 1Z" fill="url(#edg1)"/><circle cx="31" cy="25" r="7" fill="#22a6ee"/><path d="M1 25C1 18 8 12 16 12C22 12 27 16 27 21C27 24 25 26 25 28C25 32 29 36 36 36C39 36 42 35 44 34C40 42 32 47 24 47C11 47 1 37 1 25Z" fill="#1f78d4"/><path d="M14 40C10 35 10 26 16 22C20 19 26 20 27 21C27 24 25 26 25 28C25 32 29 36 36 36C39 36 42 35 44 34C40 42 32 47 24 47C20 47 16 44 14 40Z" fill="#1850a8"/></svg>
<div class="a" style="left:436px;top:680px;width:48px;height:40px;background:#37434e"></div>
<div class="a" style="left:436px;top:718px;width:48px;height:2px;background:#8ec0f6"></div>
<svg style="left:448px;top:690px" width="23" height="20" viewBox="0 0 23 20"><path d="M0 1H9L11 3H22V18H0Z" fill="#e2a93a"/><rect x="0" y="3.5" width="22.5" height="14.5" fill="#f8d468"/><rect x="5" y="10.5" width="13" height="8.5" fill="#3d8fd8"/><rect x="9.5" y="14" width="4" height="4" fill="#f2c24a"/></svg>
<svg style="left:497px;top:687px" width="24" height="25" viewBox="0 0 46 47"><path d="M23 47C10 47 1 37 1 26C1 18 4 12 7 9L8 14L12 7L14 12Q18 8 24 8Q31 8 35 13Q34 6 30 1Q40 5 44 16Q46 22 45 28C44 38 35 47 23 47Z" fill="url(#ffg)"/><circle cx="24" cy="27" r="11" fill="url(#ffp)"/><path d="M8 22Q14 15 22 18Q16 20 15 25Q13 30 18 35Q10 33 8 22Z" fill="#ff8a1a"/></svg>
<!-- tray -->
<svg style="left:1073px;top:696px" width="12" height="7" viewBox="0 0 12 7"><path d="M0.5 6.5L6 1L11.5 6.5" fill="none" stroke="#fff" stroke-width="1.2"/></svg>
<svg style="left:1098px;top:692px" width="12" height="16" viewBox="0 0 12 16"><path d="M2 2Q6 -0.5 10 2M2 14Q6 16.5 10 14" fill="none" stroke="#fff" stroke-width="1"/><rect x="0.5" y="4.5" width="7" height="7" fill="none" stroke="#fff" stroke-width="1.1"/><path d="M8 6.5L11.5 4.5V11.5L8 9.5Z" fill="none" stroke="#fff" stroke-width="1.1"/></svg>
<svg style="left:1119px;top:693px" width="17" height="14" viewBox="0 0 17 14"><g fill="none" stroke="#fff" stroke-width="1.1"><rect x="3.5" y="1.5" width="13" height="8"/><path d="M10 9.5V12.5M6 13.5H14M0.5 0.5V9"/></g><rect x="0" y="2" width="6" height="4" fill="#001220"/><path d="M1.5 3H4.5L3 5Z" fill="#fff"/><path d="M0.5 1V6H5.5" fill="none" stroke="#fff" stroke-width="1"/></svg>
<svg style="left:1143px;top:692px" width="16" height="16" viewBox="0 0 16 16"><path d="M0.5 5.5H3.5L7.5 1.5V14.5L3.5 10.5H0.5Z" fill="none" stroke="#fff" stroke-width="1.1"/><path d="M10 5Q11.5 8 10 11M12 3Q14.5 8 12 13M14 1.5Q17.5 8 14 14.5" fill="none" stroke="#fff" stroke-width="1.1"/></svg>
<div class="t" style="left:1160px;top:684px;width:70px;text-align:center;color:#fff;font-size:11.5px">6:57 PM</div>
<div class="t" style="left:1160px;top:702px;width:70px;text-align:center;color:#fff;font-size:11.5px">1/2/2025</div>
<svg style="left:1239px;top:692px" width="17" height="16" viewBox="0 0 17 16"><path d="M0.5 0.5H16.5V12.5H10.5L8.5 15L6.5 12.5H0.5Z" fill="none" stroke="#fff" stroke-width="1.1"/></svg>
<div class="a" style="left:1274px;top:680px;width:1px;height:40px;background:#3a4650"></div>
</div>
<!-- watermark -->
<svg style="left:1035px;top:605px" width="200" height="70" viewBox="1035 605 200 70"><g fill="none" stroke="#94b8ee" stroke-width="3.4" stroke-linejoin="miter">
<path d="M1040.5 659L1049.5 622.5L1058.5 659M1043.5 649.5H1055.5"/>
<path d="M1064 659V622.5L1078.5 659V622.5"/>
<path d="M1084 622.5L1093 641L1102 622.5M1093 641V659"/>
<path d="M1116.5 617.5Q1112.2 617.5 1112.2 621V662.4"/>
<path d="M1121.9 653.6V610.8L1162.3 634.2L1157.4 637.1"/>
<path d="M1126.3 624L1162.3 645.9L1114.6 663.4"/>
<path d="M1148.6 643.9L1121.9 653.6"/>
<path d="M1172.5 659V622.5H1180Q1187 622.5 1187 632Q1187 641 1180 641H1172.5M1179 641L1187 659"/>
<path d="M1193.5 622.5V650Q1193.5 659 1200.5 659Q1207.5 659 1207.5 650V622.5"/>
<path d="M1214 659V622.5L1228.5 659V622.5"/>
</g></svg>
<div class="t" style="left:1075px;top:631px;width:200px;text-align:right;color:#fff;font-size:12px">Test Mode</div>
<div class="t" style="left:1075px;top:647px;width:200px;text-align:right;color:#fff;font-size:12px">Windows 10 Pro</div>
<div class="t" style="left:1076px;top:664px;width:200px;text-align:right;color:#fff;font-size:11.3px">Build 19041.vb_release.191206-1406</div>

</body></html>
